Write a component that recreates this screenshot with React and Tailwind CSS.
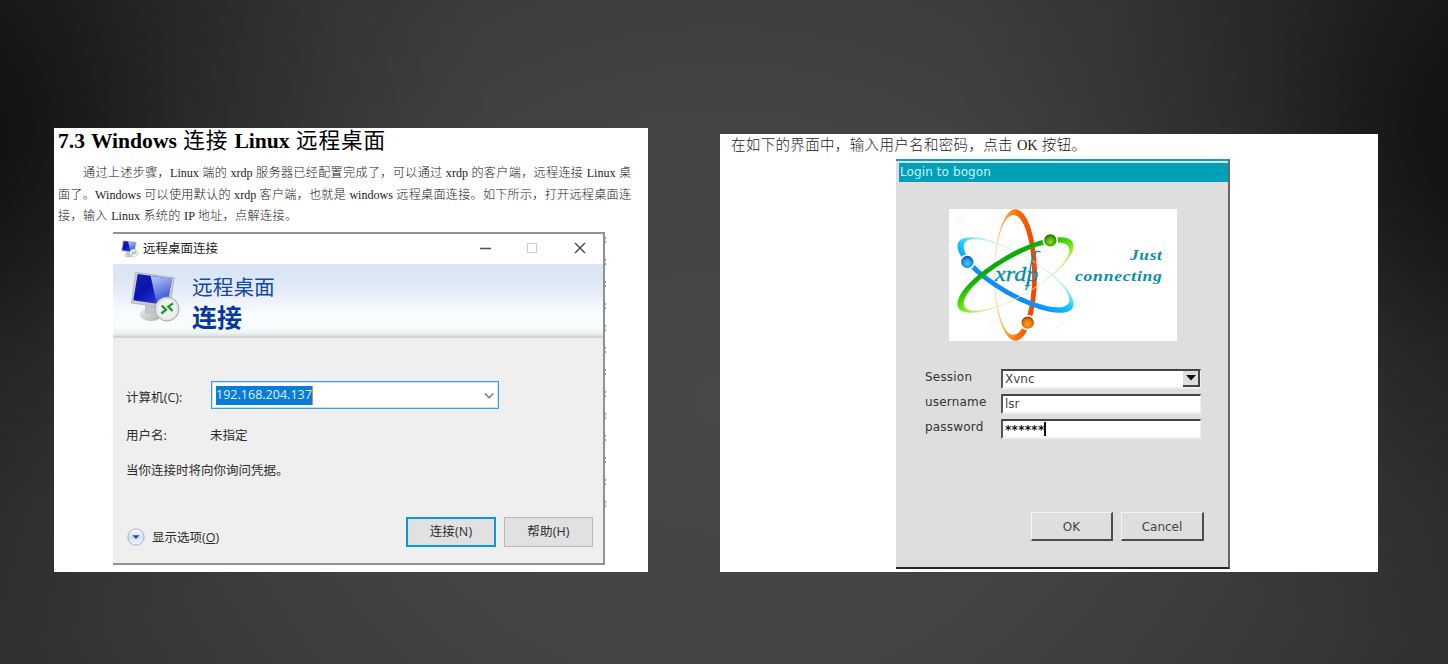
import React from "react";

const SERIF = "font-['Liberation_Serif','Noto_Sans_CJK_SC',serif]";
const UI = "font-['Open_Sans','Noto_Sans_CJK_SC',sans-serif]";
const X11 = "font-['DejaVu_Sans',sans-serif]";

function MonitorIcon({ className }) {
  return (
    <svg className={className} viewBox="0 0 150 156" fill="none">
      <defs>
        <linearGradient id="scr" x1="0" y1="0" x2="1" y2="1">
          <stop offset="0" stopColor="#1a22a8" />
          <stop offset="0.4" stopColor="#0a12b4" />
          <stop offset="1" stopColor="#3a55e0" />
        </linearGradient>
        <linearGradient id="shine" x1="0" y1="0" x2="0.3" y2="1">
          <stop offset="0" stopColor="#b9cdfb" />
          <stop offset="1" stopColor="#2f49d8" />
        </linearGradient>
        <linearGradient id="stand" x1="0" y1="0" x2="1" y2="1">
          <stop offset="0" stopColor="#f2f2f2" />
          <stop offset="1" stopColor="#a9acad" />
        </linearGradient>
      </defs>
      <ellipse cx="60" cy="130" rx="34" ry="20" fill="url(#stand)" />
      <path d="M42 98l40 6-2 28-38-4z" fill="#c3c6c8" />
      <path d="M14 4L130 20l-14 92L1 96z" fill="#c9cccf" stroke="#a6aab0" strokeWidth="2" />
      <path d="M20 9l103 14-15 80L7 88z" fill="url(#scr)" />
      <path d="M59 15l64 8-15 80-31-5z" fill="url(#shine)" />
      <circle cx="108" cy="114" r="36" fill="#e3e6e6" stroke="#a4a9a9" strokeWidth="3" />
      <circle cx="108" cy="114" r="28" fill="#f0f2f1" />
      <path d="M92 104l13 12-14 12M126 97l-14 10 13 13" stroke="#1b9b2b" strokeWidth="7" />
    </svg>
  );
}

function RdpDialog() {
  return (
    <div className={`relative ml-[59px] mt-[4px] flex h-[333px] w-[492px] flex-col border-b-2 border-r-2 border-t-2 border-[#929292] bg-[#efefef] text-[12.5px] text-[#2c2c2c] ${UI}`}>
      <div className="flex h-[30px] shrink-0 items-center bg-white pl-[8px]">
        <MonitorIcon className="h-[18px] w-[18px]" />
        <span className="ml-[4px] text-[12.5px] leading-none text-[#222]">远程桌面连接</span>
        <svg className="ml-auto mr-[13px] -mt-[2px]" width="110" height="14" viewBox="0 0 110 14" fill="none">
          <path d="M0 7.5h11" stroke="#555" strokeWidth="1.6" />
          <rect x="47.5" y="2.5" width="9" height="9" stroke="#ccc" />
          <path d="M95 2l10 10M105 2L95 12" stroke="#444" strokeWidth="1.4" />
        </svg>
      </div>
      <div className="flex h-[70px] shrink-0 bg-[linear-gradient(180deg,#d9e5f4_0%,#dde7f6_22%,#e9effa_45%,#f8fbfd_70%,#f8fcfd_90%,#e9f2f2_100%)] pl-[18px] pt-[7px]">
        <MonitorIcon className="h-[52px] w-[50px]" />
        <div className="ml-[11px] flex flex-col text-[#1449a4]">
          <span className="mt-[6px] h-[21px] text-[20.7px] leading-[21px]">远程桌面</span>
          <span className="mt-[7px] text-[25px] font-bold leading-[25px] text-[#0338a0]">连接</span>
        </div>
      </div>
      <div className="h-[4px] shrink-0 border-b-2 border-[#d4d4d4] bg-[#e4e4e4]" />
      <div className="flex flex-col pl-[13px]">
        <div className="mt-[43px] flex h-[28px]">
          <span className="w-[85px] pt-[8px] leading-[18px] tracking-[0.05px]">计算机(C):</span>
          <div className="flex h-[28px] w-[288px] items-center border border-[#3f9fe4] bg-white pl-[4px] pr-[3px] shadow-[inset_0_0_0_1px_#c4e1f7]">
            <span className="h-[19px] w-[97px] whitespace-nowrap border-r border-[#e38b4a] bg-[#0b7bd6] text-[12.5px] leading-[18px] tracking-[0.02px] text-[#dff0ff]">192.168.204.137</span>
            <svg className="ml-auto mt-[2px]" width="11" height="8" viewBox="0 0 11 8" fill="none"><path d="M1 1.5l4.2 4.2 4.2-4.2" stroke="#7c7c7c" strokeWidth="1.6" /></svg>
          </div>
        </div>
        <div className="mt-[18px] flex h-[18px] items-center leading-[18px]">
          <span className="w-[84px]">用户名:</span>
          <span>未指定</span>
        </div>
        <span className="mt-[17px] h-[18px] leading-[18px]">当你连接时将向你询问凭据。</span>
      </div>
      <div className="mb-[16px] mt-auto flex h-[30px] items-center pl-[14px] pr-[10px]">
        <svg className="mt-[10px]" width="18" height="18" viewBox="0 0 18 18">
          <defs><linearGradient id="disc" x1="0" y1="0" x2="0" y2="1"><stop offset="0" stopColor="#fff" /><stop offset="0.5" stopColor="#d5ddec" /><stop offset="1" stopColor="#f7faff" /></linearGradient></defs>
          <circle cx="9" cy="9" r="8.2" fill="url(#disc)" stroke="#a3b0cc" />
          <path d="M5.3 7.2h7.2L9 11z" fill="#2448b5" />
        </svg>
        <span className="ml-[7px] mt-[11px] leading-[18px]">显示选项(<u>O</u>)</span>
        <div className="ml-auto flex gap-[8px]">
          <div className="flex h-[30px] w-[90px] items-center justify-center border-2 border-[#0795e6] bg-[#e1e1e1] pt-px tracking-[0.15px]">连接(N)</div>
          <div className="flex h-[30px] w-[89px] items-center justify-center border border-[#b9b9b9] bg-[#e1e1e1] pt-px tracking-[0.15px]">帮助(H)</div>
        </div>
      </div>
      <div className="absolute -right-[3px] top-[3px] h-[280px] w-[1px] bg-[repeating-linear-gradient(180deg,#999_0_2px,transparent_2px_4px,#99a_4px_6px,transparent_6px_22px)]" />
    </div>
  );
}

const RING = "M162 225A64.5 197.5 0 1 1 291 225A64.5 197.5 0 1 1 162 225ZM164.5 225A56 180 0 1 0 276.5 225A56 180 0 1 0 164.5 225Z";

function XrdpLogo() {
  return (
    <svg className="ml-[53px] mt-[27px] h-[132px] w-[228px] shrink-0 bg-white" viewBox="27 27 684 396">
      <defs>
        <linearGradient id="o"><stop offset="0" stopColor="#fbdcae" /><stop offset="0.2" stopColor="#fbb35c" /><stop offset="0.5" stopColor="#f9780c" /><stop offset="0.85" stopColor="#f34800" /></linearGradient>
        <linearGradient id="b"><stop offset="0" stopColor="#bff5fa" /><stop offset="0.2" stopColor="#98ecfa" /><stop offset="0.5" stopColor="#16caff" /><stop offset="0.9" stopColor="#0c8dfc" /></linearGradient>
        <linearGradient id="g"><stop offset="0" stopColor="#e0f7b4" /><stop offset="0.2" stopColor="#c2f274" /><stop offset="0.5" stopColor="#5ee500" /><stop offset="0.9" stopColor="#08ad08" /></linearGradient>
        <radialGradient id="od" cx="0.5" cy="0.6"><stop offset="0" stopColor="#ffa52c" /><stop offset="0.65" stopColor="#ea7200" /><stop offset="1" stopColor="#a03a10" /></radialGradient>
        <radialGradient id="bd" cx="0.5" cy="0.6"><stop offset="0" stopColor="#4fd0ff" /><stop offset="0.65" stopColor="#1590e6" /><stop offset="1" stopColor="#1058a0" /></radialGradient>
        <radialGradient id="gd" cx="0.5" cy="0.6"><stop offset="0" stopColor="#90e020" /><stop offset="0.65" stopColor="#48a808" /><stop offset="1" stopColor="#206800" /></radialGradient>
      </defs>
      <g stroke="#f8f8f8" strokeWidth="5">
        <path d="M38 82l38-38M244 70l38-32M140 175l28-26M345 390l34-32M135 395l34-32" />
      </g>
      <path d={RING} fill="url(#o)" fillRule="evenodd" />
      <path d={RING} fill="url(#b)" fillRule="evenodd" transform="rotate(120 226.5 225)" />
      <path d={RING} fill="url(#g)" fillRule="evenodd" transform="rotate(-120 226.5 225)" />
      <g stroke="#fff" strokeWidth="5">
        <circle cx="331" cy="121" r="21" fill="url(#gd)" />
        <circle cx="82" cy="186" r="21" fill="url(#bd)" />
        <circle cx="263" cy="368" r="21" fill="url(#od)" />
      </g>
      <g fill="#078fa8" className="font-['Liberation_Serif',serif] italic">
        <text x="165" y="242" fontSize="66" textLength="130" lengthAdjust="spacingAndGlyphs" stroke="#078fa8" strokeWidth="1">xrdp</text>
        <path d="M256 270C270 262 268 205 276 180C282 158 291 150 302 156" fill="none" stroke="#078fa8" strokeWidth="4" />
      </g>
      <g fill="#078fa8" className="font-['Liberation_Serif',serif] font-bold italic">
        <text x="570" y="179" fontSize="46" letterSpacing="2" textLength="98" lengthAdjust="spacingAndGlyphs">Just</text>
        <text x="405" y="242" fontSize="46" letterSpacing="2" textLength="263" lengthAdjust="spacingAndGlyphs">connecting</text>
      </g>
    </svg>
  );
}

function Field({ label, children }) {
  return (
    <div className="flex h-[20px]">
      <span className="w-[76px] pt-[1px] text-[12px] leading-[15px] tracking-[0.2px] text-[#333]">{label}</span>
      <div className="flex h-[20px] w-[200px] items-center border-b-2 border-l-2 border-r border-t-2 border-b-[#efefef] border-l-[#555] border-r-[#efefef] border-t-[#444] bg-white pl-[2px] text-[12px] leading-none text-[#444]">
        {children}
      </div>
    </div>
  );
}

function X11Button({ children, className }) {
  return (
    <div className={`flex h-[29px] items-center justify-center border-b-2 border-l border-r-2 border-t border-b-[#4c4c4c] border-l-[#f4f4f4] border-r-[#4c4c4c] border-t-[#f4f4f4] text-[12px] text-[#444] ${className}`}>
      {children}
    </div>
  );
}

function XrdpDialog() {
  return (
    <div className={`ml-[176px] flex h-[410px] w-[334px] flex-col border-b-2 border-r-2 border-t-2 border-b-[#262626] border-r-[#666] border-t-[#05a5bd] bg-[#dedede] ${X11}`}>
      <div className="ml-[3px] mt-[2px] flex h-[19px] shrink-0 items-center bg-[#00a0b9] pb-[2px] pl-[1px] text-[12px] font-normal leading-none tracking-[0.1px] text-[#c9f3f8]">Login to bogon</div>
      <XrdpLogo />
      <div className="ml-[29px] mt-[28px] flex flex-col gap-[5px]">
        <Field label="Session">
          <span>Xvnc</span>
          <span className="ml-auto flex h-[16px] w-[17px] items-center justify-center border-b-2 border-r-2 border-[#444] bg-[#dedede]">
            <svg width="10" height="6" viewBox="0 0 10 6"><path d="M0 0h10L5 5.5z" fill="#111" /></svg>
          </span>
        </Field>
        <Field label="username">lsr</Field>
        <Field label="password">
          <span className="mt-[2px] text-[12px] font-bold tracking-[0.3px] text-[#111]">******</span>
          <span className="h-[14px] w-[1.5px] bg-[#111]" />
        </Field>
      </div>
      <div className="mb-[26px] mr-[24px] mt-auto flex justify-end gap-[8px]">
        <X11Button className="w-[82px] pt-px">OK</X11Button>
        <X11Button className="w-[83px] pt-px">Cancel</X11Button>
      </div>
    </div>
  );
}

function Line({ children, className }) {
  return <div className={`h-[21.5px] whitespace-nowrap text-justify [text-align-last:justify] ${className}`}>{children}</div>;
}

export default function App() {
  return (
    <div className="flex h-[664px] w-[1448px] items-start overflow-hidden bg-[radial-gradient(ellipse_560px_520px_at_-60px_140px,rgba(0,0,0,0.72)_0%,rgba(0,0,0,0.5)_22%,rgba(0,0,0,0.26)_45%,rgba(0,0,0,0.08)_75%,rgba(0,0,0,0)_100%),radial-gradient(ellipse_560px_520px_at_1508px_140px,rgba(0,0,0,0.72)_0%,rgba(0,0,0,0.5)_22%,rgba(0,0,0,0.26)_45%,rgba(0,0,0,0.08)_75%,rgba(0,0,0,0)_100%),radial-gradient(ellipse_900px_760px_at_724px_400px,#484848_0%,#434343_40%,#383838_70%,#2c2c2c_93%,#202020_112%)]">
      <section className={`ml-[54px] mt-[128px] h-[444px] w-[594px] shrink-0 bg-white ${SERIF}`}>
        <h1 className="ml-[4px] h-[26px] w-[327px] whitespace-nowrap text-justify text-[21.6px] font-bold leading-[26px] text-black [text-align-last:justify]">
          7.3 Windows <span className="font-normal">连接</span> Linux <span className="font-normal">远程桌面</span>
        </h1>
        <div className="ml-[4px] mt-[9px] h-[65px] w-[573px] text-[12.1px] font-light leading-[21.5px] text-[#222]">
          <Line className="pl-[25px]">通过上述步骤，Linux 端的 xrdp 服务器已经配置完成了，可以通过 xrdp 的客户端，远程连接 Linux 桌</Line>
          <Line>面了。Windows 可以使用默认的 xrdp 客户端，也就是 windows 远程桌面连接。如下所示，打开远程桌面连</Line>
          <Line className="w-[239px]">接，输入 Linux 系统的 IP 地址，点解连接。</Line>
        </div>
        <RdpDialog />
      </section>
      <section className="ml-[72px] mt-[134px] h-[438px] w-[658px] shrink-0 bg-white">
        <p className={`ml-[11px] h-[25px] w-[355px] whitespace-nowrap text-justify text-[14.5px] font-light leading-[23px] text-[#222] [text-align-last:justify] ${SERIF}`}>
          在如下的界面中，输入用户名和密码，点击 OK 按钮。
        </p>
        <XrdpDialog />
      </section>
    </div>
  );
}
